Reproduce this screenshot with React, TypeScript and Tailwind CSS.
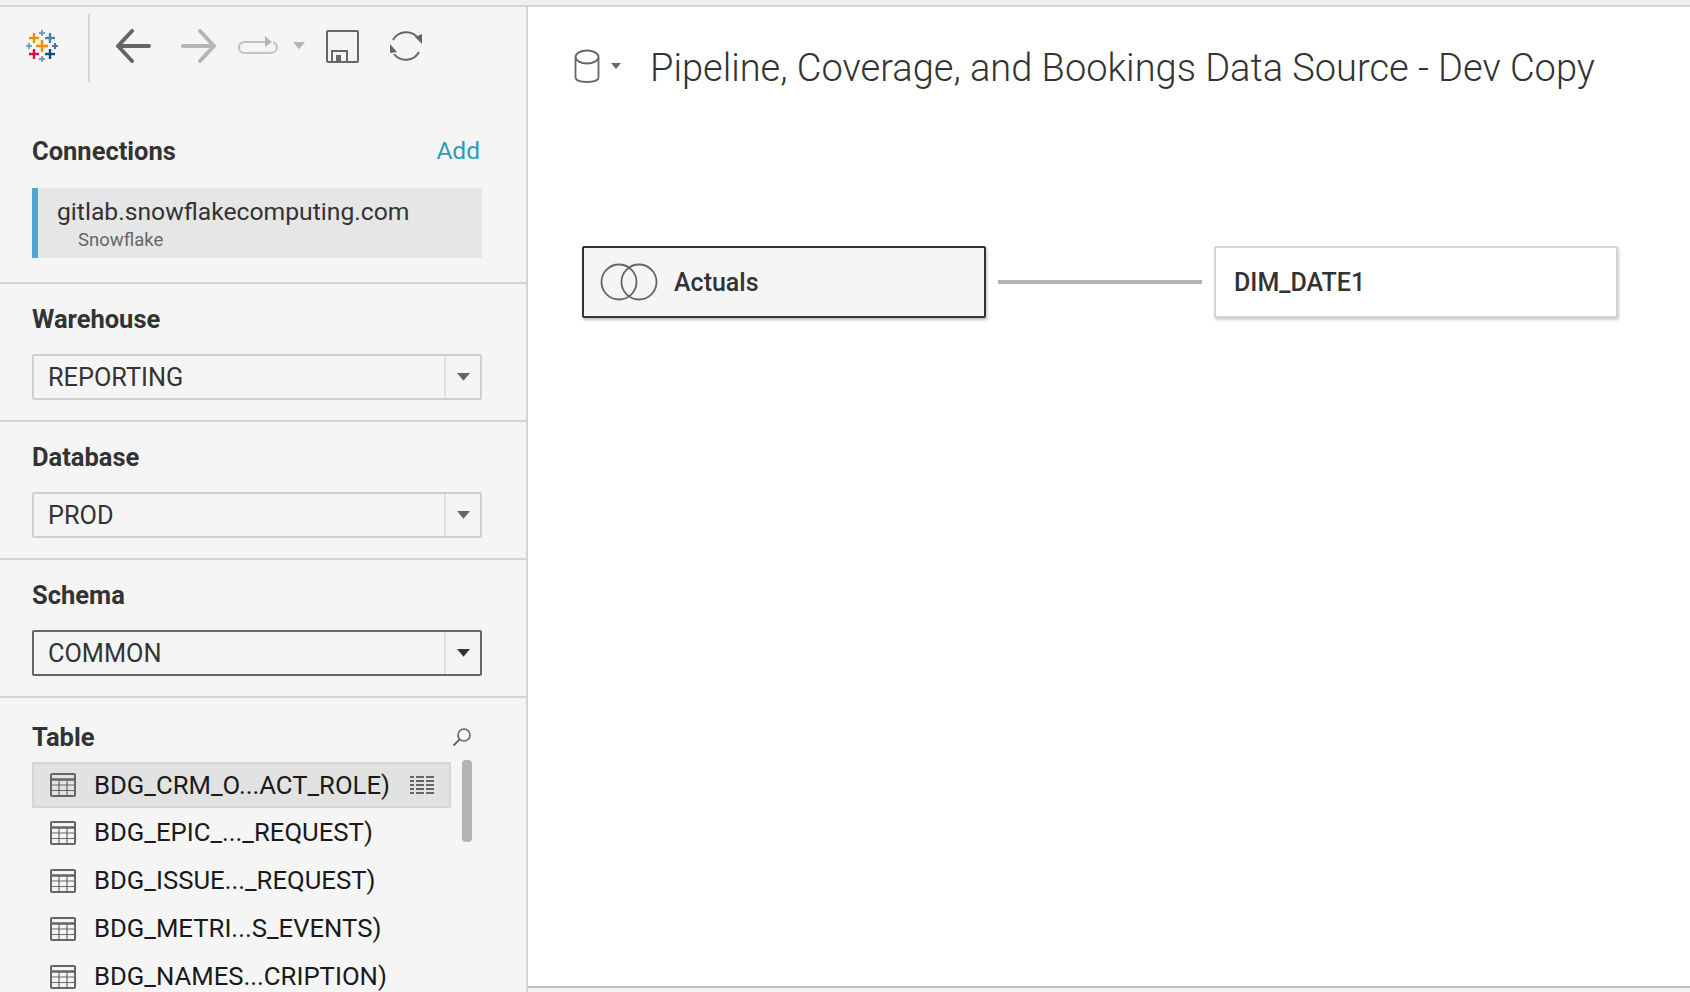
import { Fragment } from "react";

const tables = [
  "BDG_CRM_O...ACT_ROLE)",
  "BDG_EPIC_..._REQUEST)",
  "BDG_ISSUE..._REQUEST)",
  "BDG_METRI...S_EVENTS)",
  "BDG_NAMES...CRIPTION)",
];

const logoPlus = [
  { x: 42, y: 46, r: 6, w: 2.6, c: "#f28e00" },
  { x: 34, y: 38, r: 5, w: 2.4, c: "#f28e00" },
  { x: 50, y: 38, r: 5, w: 2.4, c: "#3f8a9f" },
  { x: 34, y: 54, r: 5, w: 2.4, c: "#dc0d3c" },
  { x: 50, y: 54, r: 5, w: 2.4, c: "#0f4c81" },
  { x: 42, y: 33, r: 3, w: 2, c: "#6ea5b5" },
  { x: 29, y: 46, r: 3, w: 2, c: "#76a9b8" },
  { x: 55, y: 46, r: 3, w: 2, c: "#5b6ba3" },
  { x: 42, y: 59, r: 3, w: 2, c: "#8a92b8" },
];

function TableauLogo() {
  return (
    <svg width="36" height="36" viewBox="24 28 36 36" className="ml-6 shrink-0">
      {logoPlus.map((p) => (
        <Fragment key={`${p.x}-${p.y}`}>
          <rect x={p.x - p.r} y={p.y - p.w / 2} width={p.r * 2} height={p.w} fill={p.c} />
          <rect x={p.x - p.w / 2} y={p.y - p.r} width={p.w} height={p.r * 2} fill={p.c} />
        </Fragment>
      ))}
    </svg>
  );
}

function Arrow({ flip, color }: { flip?: boolean; color: string }) {
  return (
    <svg width="36" height="34" viewBox="0 0 36 34" className={flip ? "-scale-x-100" : ""}>
      <path
        d="M17 2 L3 17 L17 32 M3 17 H34"
        fill="none"
        stroke={color}
        strokeWidth="4"
        strokeLinecap="round"
        strokeLinejoin="round"
      />
    </svg>
  );
}

function Caret({ color, size = 10 }: { color: string; size?: number }) {
  return (
    <svg width={size} height={size * 0.6} viewBox="0 0 10 6" className="shrink-0">
      <path d="M0 0 H10 L5 6 Z" fill={color} />
    </svg>
  );
}

function Toolbar() {
  return (
    <div className="flex h-[83px] items-start">
      <div className="flex h-[78px] items-center">
        <TableauLogo />
      </div>
      <div className="ml-[28px] mt-[7px] h-[68px] w-[2px] bg-[#d4d4d4]" />
      <div className="ml-[25px] flex h-[78px] items-center">
        <Arrow color="#666666" />
        <div className="ml-[30px]">
          <Arrow flip color="#b5b5b5" />
        </div>
        <svg width="42" height="22" viewBox="0 0 42 22" className="ml-[20px]">
          <path
            d="M29 7 H8 C4 7 2 9.500 2 12.500 C2 16 4 18 8 18 H33 C37 18 40 16 40 12.500 C40 10 39 8.500 36 7.500"
            fill="none"
            stroke="#c2c2c2"
            strokeWidth="2"
          />
          <path d="M28 1 L35 7 L28 12 Z" fill="#b5b5b5" />
        </svg>
        <div className="ml-[14px]">
          <Caret color="#b5b5b5" size={12} />
        </div>
        <svg width="33" height="33" viewBox="0 0 33 33" className="ml-[21px]">
          <rect x="1" y="1" width="31" height="31" rx="1" fill="none" stroke="#666666" strokeWidth="2" />
          <path d="M6 31 V21 H21 V31" fill="none" stroke="#666666" strokeWidth="2" />
          <rect x="10" y="25" width="5" height="6" fill="#666666" />
        </svg>
        <svg width="34" height="34" viewBox="0 0 34 34" className="ml-[30px]">
          <path d="M4 11 A15 15 0 0 1 29 9" fill="none" stroke="#666666" strokeWidth="2" />
          <path d="M30 23 A15 15 0 0 1 5 25" fill="none" stroke="#666666" strokeWidth="2" />
          <path d="M26 8 L33 5 L33 15 Z" fill="#666666" />
          <path d="M1 15 L8 23 L1 24 Z" fill="#666666" />
        </svg>
      </div>
    </div>
  );
}

function Picker({ label, value, active }: { label: string; value: string; active?: boolean }) {
  return (
    <section className="h-[138px] border-b-2 border-[#d4d4d4] px-8 pt-[20px]">
      <h2 className="text-[25.5px] leading-[30px] font-bold text-[#333333]">{label}</h2>
      <div
        className={`mt-[20px] flex h-[46px] w-[450px] items-center rounded-[2px] border-2 ${
          active ? "border-[#666666]" : "border-[#cfcfcf]"
        }`}
      >
        <span className="flex-1 pl-[14px] pt-[2px] text-[25.3px] text-[#333333]">{value}</span>
        <div className="flex h-full w-[36px] items-center justify-center border-l-2 border-[#e2e2e2]">
          <Caret color={active ? "#333333" : "#666666"} size={13} />
        </div>
      </div>
    </section>
  );
}

function TableIcon() {
  return (
    <svg width="26" height="24" viewBox="0 0 26 24" className="shrink-0">
      <rect x="1" y="1" width="24" height="22" rx="1" fill="none" stroke="#666666" strokeWidth="2" />
      <path d="M1 6.500 H25" stroke="#666666" strokeWidth="2.500" />
      <path d="M1 12 H25 M1 17.500 H25 M9 6 V23 M17 6 V23" stroke="#666666" strokeWidth="1.200" />
    </svg>
  );
}

function ListIcon() {
  return (
    <svg width="24" height="18" viewBox="0 0 24 18" className="ml-auto mr-[1px] shrink-0">
      {[0, 4, 8, 12, 16].map((y) => (
        <Fragment key={y}>
          <rect x="0" y={y} width="4" height="2" fill="#666666" />
          <rect x="6" y={y} width="8" height="2" fill="#666666" />
          <rect x="16" y={y} width="8" height="2" fill="#666666" />
        </Fragment>
      ))}
    </svg>
  );
}

export default function App() {
  return (
    <div className="h-[992px] w-[1690px] overflow-hidden bg-[#f3f3f3] font-['Roboto','Liberation_Sans',sans-serif]">
      <div className="h-[7px] border-b-2 border-[#d4d4d4] bg-[#f1f0ee]" />
      <div className="flex h-[985px]">
        <aside className="w-[528px] shrink-0 overflow-hidden border-r-2 border-[#d4d4d4] bg-[#f5f5f5]">
          <Toolbar />
          <section className="h-[194px] border-b-2 border-[#d4d4d4] px-8 pt-[46px]">
            <div className="flex w-[448px] items-center justify-between">
              <h2 className="text-[25.5px] leading-[30px] font-bold text-[#333333]">Connections</h2>
              <span className="text-[24.5px] leading-[30px] text-[#2b9bbf]">Add</span>
            </div>
            <div className="mt-[22px] h-[70px] w-[450px] border-l-[6px] border-[#4ba8cf] bg-[#e6e6e6] pl-[19px] pt-[7px]">
              <p className="text-[24.7px] leading-[34px] text-[#333333]">gitlab.snowflakecomputing.com</p>
              <p className="pl-[21px] text-[18.5px] leading-[23px] text-[#666666]">Snowflake</p>
            </div>
          </section>
          <Picker label="Warehouse" value="REPORTING" />
          <Picker label="Database" value="PROD" />
          <Picker label="Schema" value="COMMON" active />
          <section className="relative px-8 pt-[24px]">
            <div className="flex w-[440px] items-center justify-between">
              <h2 className="text-[25.5px] leading-[30px] font-bold text-[#333333]">Table</h2>
              <svg width="20" height="20" viewBox="0 0 20 20">
                <circle cx="12" cy="8" r="6" fill="none" stroke="#666666" strokeWidth="1.600" />
                <path d="M7.500 12.500 L1.500 18.500" stroke="#666666" strokeWidth="2" />
              </svg>
            </div>
            <ul className="mt-[10px] w-[419px]">
              {tables.map((name, i) => (
                <li
                  key={name}
                  className={`flex items-center pl-[16px] pr-[14px] ${
                    i === 0
                      ? "mb-[2px] h-[46px] border-2 border-[#d6d6d6] bg-[#e2e2e2]"
                      : "mb-[3px] h-[45px] border-2 border-transparent"
                  }`}
                >
                  <TableIcon />
                  <span className="ml-[18px] whitespace-nowrap text-[25.7px] text-[#1a1a1a]">{name}</span>
                  {i === 0 && <ListIcon />}
                </li>
              ))}
            </ul>
            <div className="absolute left-[462px] top-[62px] h-[82px] w-[10px] rounded-[4px] bg-[#b3b3b3]" />
          </section>
        </aside>
        <main className="flex h-[981px] min-w-0 flex-1 flex-col border-b-2 border-[#bfbfbf] bg-white">
          <header className="flex h-[120px] items-center pl-[46px]">
            <svg width="26" height="34" viewBox="0 0 26 34" className="mb-[2px] shrink-0">
              <ellipse cx="13" cy="8" rx="11.500" ry="6.500" fill="none" stroke="#666666" strokeWidth="1.800" />
              <path
                d="M1.500 8 V28 C1.500 31 6 33 13 33 C20 33 24.500 31 24.500 28 V8"
                fill="none"
                stroke="#666666"
                strokeWidth="1.800"
              />
            </svg>
            <div className="mb-[2px] ml-[11px]">
              <Caret color="#666666" />
            </div>
            <h1 className="ml-[29px] mt-[3px] whitespace-nowrap text-[38px] font-light text-[#333333]">
              Pipeline, Coverage, and Bookings Data Source - Dev Copy
            </h1>
          </header>
          <div className="mt-[119px] flex items-center pl-[54px]">
            <div className="flex h-[72px] w-[404px] items-center rounded-[2px] border-2 border-[#333333] bg-[#f5f5f5] pl-[16px] shadow-[1px_2px_3px_rgba(0,0,0,0.25)]">
              <svg width="58" height="38" viewBox="0 0 58 38">
                <circle cx="19" cy="19" r="17.500" fill="none" stroke="#666666" strokeWidth="1.800" />
                <circle cx="39" cy="19" r="17.500" fill="none" stroke="#666666" strokeWidth="1.800" />
              </svg>
              <span className="ml-[16px] pt-[1px] text-[25px] font-medium text-[#333333]">Actuals</span>
            </div>
            <div className="ml-[12px] h-[4px] w-[204px] bg-[#b3b3b3]" />
            <div className="ml-[12px] flex h-[72px] w-[404px] items-center rounded-[2px] border-2 border-[#d4d4d4] bg-white pl-[18px] shadow-[1px_2px_3px_rgba(0,0,0,0.2)]">
              <span className="pt-[1px] text-[25px] font-medium text-[#333333]">DIM_DATE1</span>
            </div>
          </div>
        </main>
      </div>
    </div>
  );
}
